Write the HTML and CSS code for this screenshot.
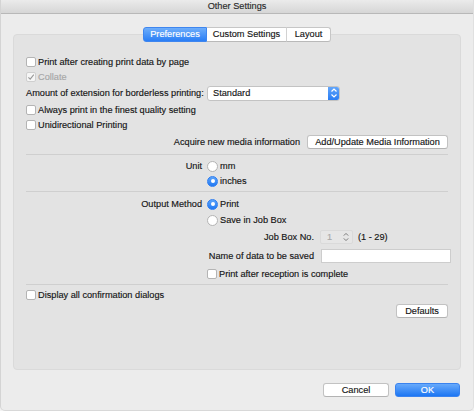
FILE: index.html
```html
<!DOCTYPE html>
<html>
<head>
<meta charset="utf-8">
<link rel="stylesheet" href="styles.css">
</head>
<body>
<div class="window">
  <div class="titlebar">Other Settings</div>
  <div class="tabs">
    <span class="tab tab-pref sel">Preferences</span>
    <span class="tab tab-custom">Custom Settings</span>
    <span class="tab tab-layout">Layout</span>
  </div>
  <div class="panel">
    <div class="row"><span class="cb"></span><span class="lbl">Print after creating print data by page</span></div>
    <div class="row mt1 disabled"><span class="cb checked"><svg viewBox="0 0 10 10" width="10" height="10"><path d="M2.4 5.3 L4.2 7.2 L7.8 2.6" fill="none" stroke="#9a9a9a" stroke-width="1.1"/></svg></span><span class="lbl">Collate</span></div>
    <div class="row mt2">
      <span class="col-left">Amount of extension for borderless printing:</span>
      <span class="popup"><span class="popup-text">Standard</span><span class="popup-arrows"><svg viewBox="0 0 12 14" width="12" height="14"><path d="M3.5 5.5 L6 3 L8.5 5.5 M3.5 8.5 L6 11 L8.5 8.5" fill="none" stroke="#fff" stroke-width="1.2"/></svg></span></span>
    </div>
    <div class="row mt3"><span class="cb"></span><span class="lbl">Always print in the finest quality setting</span></div>
    <div class="row mt1"><span class="cb"></span><span class="lbl">Unidirectional Printing</span></div>
    <div class="row mt3 right">
      <span class="lbl">Acquire new media information</span>
      <span class="btn btn-media">Add/Update Media Information</span>
    </div>
    <div class="sep sep1"></div>
    <div class="row mt4">
      <span class="col-right">Unit</span>
      <span class="rb"></span><span class="lbl">mm</span>
    </div>
    <div class="row mt1">
      <span class="col-right"></span>
      <span class="rb on"></span><span class="lbl">inches</span>
    </div>
    <div class="sep sep2"></div>
    <div class="row mt5">
      <span class="col-right">Output Method</span>
      <span class="rb on"></span><span class="lbl">Print</span>
    </div>
    <div class="row mt2">
      <span class="col-right"></span>
      <span class="rb"></span><span class="lbl">Save in Job Box</span>
    </div>
    <div class="row mt3">
      <span class="col-wide">Job Box No.</span>
      <span class="stepper"><span class="stepper-val">1</span><svg viewBox="0 0 8 12" width="8" height="12"><path d="M1.8 4.6 L4 2.4 L6.2 4.6 M1.8 7.4 L4 9.6 L6.2 7.4" fill="none" stroke="#7a7a7a" stroke-width="1"/></svg></span>
      <span class="range">(1 - 29)</span>
    </div>
    <div class="row mt5">
      <span class="col-wide">Name of data to be saved</span>
      <span class="field"></span>
    </div>
    <div class="row mt4">
      <span class="col-right"></span>
      <span class="cb"></span><span class="lbl">Print after reception is complete</span>
    </div>
    <div class="sep sep3"></div>
    <div class="row mt3"><span class="cb"></span><span class="lbl">Display all confirmation dialogs</span></div>
    <div class="row mt2 right"><span class="btn btn-defaults">Defaults</span></div>
  </div>
  <div class="footer">
    <span class="btn btn-cancel">Cancel</span>
    <span class="btn btn-ok">OK</span>
  </div>
</div>
</body>
</html>
```

FILE: styles.css
```css
* { box-sizing: border-box; }
html, body { margin: 0; padding: 0; }
body {
  background: #f2f2f2;
  font-family: "Liberation Sans", Arial, sans-serif;
  font-size: 9.2px;
  color: #151515;
  -webkit-text-stroke: 0.15px currentColor;
}
.window {
  width: 474px;
  height: 411px;
  background: #ececec;
  border-left: 1px solid #d4d4d4;
  border-right: 1px solid #e0e0e0;
  border-bottom: 1px solid #d8d8d8;
  border-radius: 0 0 5px 5px;
  overflow: hidden;
  display: flex;
  flex-direction: column;
}
.titlebar {
  height: 14px;
  line-height: 13px;
  text-align: center;
  background: linear-gradient(#ebebeb, #d6d6d6);
  border-bottom: 1px solid #b8b8b8;
  color: #2a2a2a;
  margin: 0 -1px;
}
.tabs {
  display: flex;
  justify-content: center;
  margin-top: 13px;
  margin-bottom: -8px;
  position: relative;
  z-index: 1;
  height: 15px;
}
.tab {
  height: 15px;
  line-height: 13px;
  text-align: center;
  background: #fff;
  border-top: 1px solid #c6c6c6;
  border-bottom: 1px solid #b9b9b9;
  border-right: 1px solid #d2d2d2;
  color: #151515;
}
.tab-pref { width: 64px; border-left: 1px solid #4b8ef0; border-radius: 3px 0 0 3px; }
.tab-custom { width: 80px; }
.tab-layout { width: 44px; border-right: 1px solid #c6c6c6; border-radius: 0 3px 3px 0; }
.tab.sel {
  background: linear-gradient(#6eaefb, #2a7ef5);
  border-color: #3f86ef;
  color: #fff;
}
.panel {
  margin: 0 12px 0 12px;
  height: 336px;
  background: #e3e3e3;
  border: 1px solid #dadada;
  border-radius: 4px;
  padding: 20px 12px 0 12px;
  display: flex;
  flex-direction: column;
}
.row {
  height: 14px;
  display: flex;
  align-items: center;
  white-space: nowrap;
}
.row.right { justify-content: flex-end; }
.mt1 { margin-top: 1px; }
.mt2 { margin-top: 2px; }
.mt3 { margin-top: 3px; }
.mt4 { margin-top: 4px; }
.mt5 { margin-top: 5px; }
.disabled { color: #a6a6a6; }
.cb {
  width: 10px;
  height: 10px;
  background: #fff;
  border: 1px solid #b4b4b4;
  border-radius: 2px;
  margin-right: 2px;
  flex: none;
  display: flex;
}
.cb.checked { background: #f6f6f6; border-color: #cfcfcf; }
.cb svg { margin: -1px; }
.rb {
  width: 11px;
  height: 11px;
  border-radius: 50%;
  background: #fff;
  border: 1px solid #b4b4b4;
  margin-right: 2px;
  flex: none;
  position: relative;
}
.rb.on {
  background: linear-gradient(#5ea4fa, #1f78f3);
  border-color: #2f7ef0;
}
.rb.on::after {
  content: "";
  position: absolute;
  left: 2.5px;
  top: 2.5px;
  width: 4px;
  height: 4px;
  border-radius: 50%;
  background: #fff;
}
.col-left { width: 181px; flex: none; }
.col-right { width: 181px; flex: none; text-align: right; padding-right: 5px; }
.col-wide { width: 294px; flex: none; text-align: right; padding-right: 6px; }
.popup {
  width: 133px;
  height: 15px;
  background: #fff;
  border: 1px solid #c3c3c3;
  border-radius: 3px;
  display: flex;
  align-items: center;
  overflow: hidden;
}
.popup-text { flex: 1; padding-left: 5px; }
.popup-arrows {
  width: 12px;
  height: 15px;
  margin: -1px -1px -1px 0;
  background: linear-gradient(#67a9fb, #2479f3);
  border-radius: 0 3px 3px 0;
  display: flex;
  align-items: center;
}
.btn {
  display: inline-flex;
  align-items: center;
  justify-content: center;
  height: 14px;
  background: #fff;
  border: 1px solid #c2c2c2;
  border-bottom-color: #b3b3b3;
  border-radius: 3px;
  color: #151515;
}
.btn-media { width: 141px; margin-left: 7px; }
.btn-defaults { width: 52px; }
.sep { height: 1px; background: #cfcfcf; flex: none; }
.sep1 { margin-top: 5px; }
.sep2 { margin-top: 3px; }
.sep3 { margin-top: 3px; }
.stepper {
  width: 33px;
  height: 14px;
  background: #e6e6e6;
  border: 1px solid #dadada;
  border-radius: 2px;
  display: flex;
  align-items: center;
  flex: none;
}
.stepper-val { flex: 1; padding-left: 6px; color: #a8a8a8; }
.stepper svg { margin-right: 2px; }
.range { margin-left: 5px; }
.field {
  width: 130px;
  height: 14px;
  background: #fff;
  border: 1px solid #cdcdcd;
  flex: none;
  margin-left: 1px;
}
.footer {
  display: flex;
  justify-content: flex-end;
  padding: 13px 13px 0 0;
}
.btn-cancel { width: 66px; }
.btn-ok {
  width: 65px;
  margin-left: 6px;
  background: linear-gradient(#68aafb, #1c76f3);
  border-color: #3a83ef;
  color: #fff;
}
```
